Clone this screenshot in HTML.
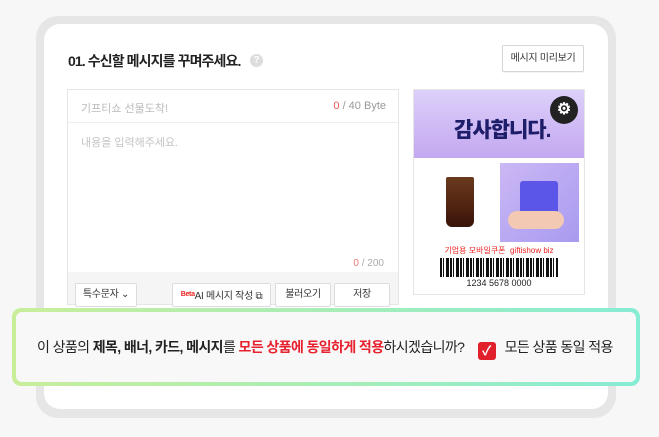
<!DOCTYPE html>
<html><head><meta charset="utf-8"><style>
*{box-sizing:border-box;margin:0;padding:0}
body{width:659px;height:437px;background:#f7f7f7;font-family:"Liberation Sans","Noto Sans CJK KR",sans-serif;position:relative;overflow:hidden}
.frame{position:absolute;left:36px;top:16px;width:580px;height:402px;background:#e6e6e6;border-radius:22px}
.card{position:absolute;left:44px;top:24px;width:564px;height:385px;background:#fff;border-radius:16px}
.t{position:absolute;left:68px;top:51px;font-size:14px;font-weight:bold;color:#222;letter-spacing:-0.9px}
.q{position:absolute;left:250px;top:54px;width:13px;height:13px;border-radius:50%;background:#ddd;color:#fff;font-size:10px;text-align:center;line-height:13px;font-weight:bold}
.pv{position:absolute;left:502px;top:45px;width:82px;height:27px;border:1px solid #d6d6d6;border-radius:2px;font-size:10px;color:#333;text-align:center;line-height:25px;background:#fff;box-shadow:0 1px 1px rgba(0,0,0,.05);letter-spacing:-0.3px;white-space:nowrap}
.box{position:absolute;left:67px;top:89px;width:332px;height:216px;border:1px solid #e5e5e5}
.row1{height:33px;border-bottom:1px solid #eee;font-size:11px;color:#bbb;padding:10px 13px;position:relative}
.row1 span{position:absolute;right:12px;top:10px;color:#999}
.ph{font-size:11px;color:#c4c4c4;padding:11px 13px}
.cnt{position:absolute;right:14px;top:168px;font-size:10px;color:#aaa}
.foot{position:absolute;left:0;right:0;top:182px;bottom:0;background:#f5f5f5}
.b{position:absolute;top:283px;height:24px;border:1px solid #ddd;background:#fff;font-size:10px;color:#333;text-align:center;line-height:22px;border-radius:2px;white-space:nowrap;letter-spacing:-0.3px}
.pre{position:absolute;left:413px;top:89px;width:172px;height:206px;border:1px solid #e5e5e5;background:#fff}
.ban{height:68px;background:linear-gradient(#ddd0fa,#c3a8f0);font-size:21px;font-weight:900;color:#1e1d6a;padding:24px 0 0 40px;letter-spacing:-1px;position:relative}
.gear{position:absolute;left:136px;top:6px;width:28px;height:28px;border-radius:50%;background:#222;color:#fff;font-size:16px;text-align:center;line-height:28px;letter-spacing:0}
.ov{position:absolute;left:12px;top:308px;width:628px;height:78px;border-radius:9px;background:linear-gradient(90deg,#c9ee9a,#86ecd4);padding:4px}
.ovi{width:100%;height:100%;background:#f8f8f8;border-radius:6px;font-size:14px;color:#222;padding-top:25px;padding-left:21px;letter-spacing:-0.6px;white-space:nowrap}
.ovi b{font-weight:bold}.r{color:#e8212e;font-weight:bold}
.ck{display:inline-block;width:18px;height:18px;background:#e0202a;border-radius:3px;vertical-align:-3px;margin:0 9px 0 10px;color:#fff;font-size:13px;text-align:center;line-height:18px;font-weight:bold;letter-spacing:0}
</style></head><body>
<div class="frame"></div><div class="card"></div>
<div class="t">01. 수신할 메시지를 꾸며주세요.</div><div class="q">?</div>
<div class="pv">메시지 미리보기</div>
<div class="box">
<div class="row1">기프티쇼 선물도착!<span><span style="position:static;color:#e55">0</span> / 40 Byte</span></div>
<div class="ph">내용을 입력해주세요.</div>
<div class="cnt"><span style="color:#e77">0</span> / 200</div>
<div class="foot"></div>
</div>
<div class="b" style="left:75px;width:62px">특수문자 ⌄</div>
<div class="b" style="left:172px;width:99px"><span style="color:#e22;font-size:7px;font-weight:bold;vertical-align:3px">Beta</span>AI 메시지 작성 ⧉</div>
<div class="b" style="left:275px;width:56px">불러오기</div>
<div class="b" style="left:334px;width:56px">저장</div>
<div class="pre">
<div class="ban">감사합니다.<div class="gear">⚙</div></div>
<div style="position:absolute;left:6px;top:73px;width:79px;height:79px;background:#fff"><div style="margin:14px auto 0;width:28px;height:50px;background:linear-gradient(#6b3a1e,#3a1408);border-radius:2px 2px 6px 6px"></div></div>
<div style="position:absolute;left:86px;top:73px;width:79px;height:79px;background:linear-gradient(135deg,#cbb8f5,#a99af0)"><div style="position:absolute;left:20px;top:18px;width:38px;height:34px;background:#5b55e8;border-radius:3px"></div><div style="position:absolute;left:8px;top:48px;width:56px;height:18px;background:#f4c9b3;border-radius:9px"></div></div>
<div style="position:absolute;left:0;right:0;top:155px;text-align:center;font-size:8px;color:#e22">기업용 모바일쿠폰 &nbsp;giftishow biz</div>
<div style="position:absolute;left:26px;top:168px;width:118px;height:19px;background:repeating-linear-gradient(90deg,#111 0 2px,#fff 2px 3px,#111 3px 4px,#fff 4px 6px,#111 6px 9px,#fff 9px 10px)"></div>
<div style="position:absolute;left:0;right:0;top:188px;text-align:center;font-size:9px;color:#222">1234 5678 0000</div>
</div>
<div class="ov"><div class="ovi">이 상품의 <b>제목, 배너, 카드, 메시지</b>를 <span class="r">모든 상품에 동일하게 적용</span>하시겠습니까? <span class="ck">✓</span>모든 상품 동일 적용</div></div>
</body></html>
